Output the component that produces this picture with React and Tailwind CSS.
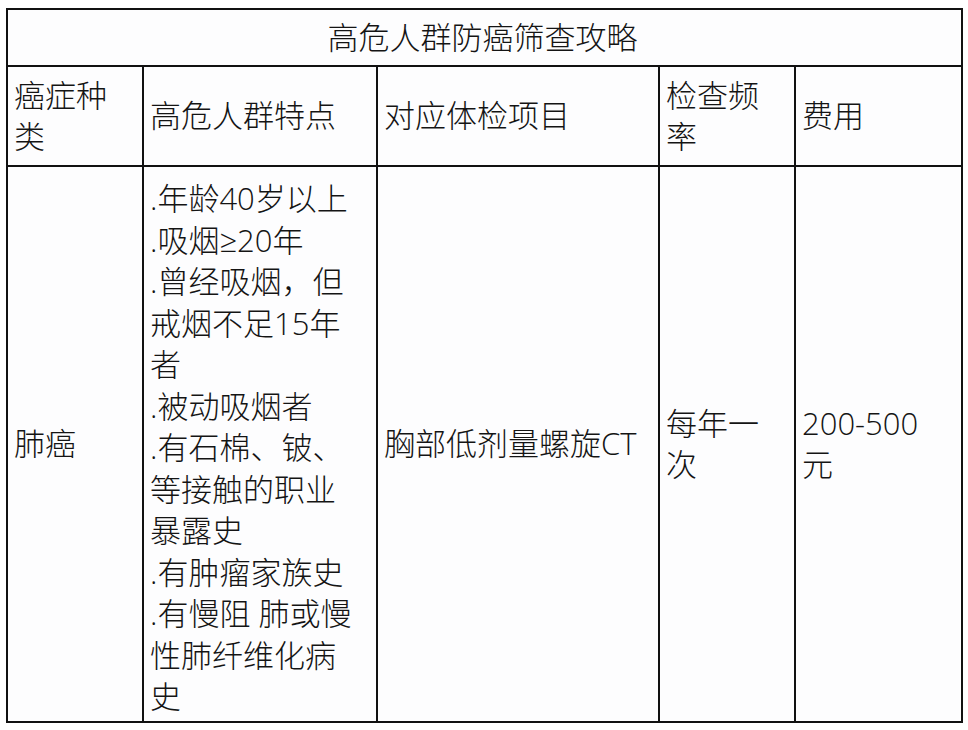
const FONT = { fontFamily: '"Open Sans", "Noto Sans CJK SC", sans-serif' }

const risks = [
  '.年龄40岁以上',
  '.吸烟≥20年',
  '.曾经吸烟，但',
  '戒烟不足15年',
  '者',
  '.被动吸烟者',
  '.有石棉、铍、',
  '等接触的职业',
  '暴露史',
  '.有肿瘤家族史',
  '.有慢阻 肺或慢',
  '性肺纤维化病',
  '史',
]

function Cell({ lines, last, className = '' }) {
  return (
    <div
      className={`flex flex-col justify-center pl-[6px] overflow-hidden ${
        last ? '' : 'border-r-2 border-[#111]'
      } ${className}`}
    >
      {lines.map((l, i) => (
        <div key={i} className="whitespace-nowrap">
          {l}
        </div>
      ))}
    </div>
  )
}

export default function App() {
  return (
    <div className="w-[968px] h-[730px] bg-white pt-[8px] pl-[6px]" style={FONT}>
      <div className="w-[957px] border-2 border-[#111] text-[31px] leading-[41.5px] font-light text-[#141414] bg-[#fdfdfe]">
        <div className="h-[57px] border-b-2 border-[#111] flex items-center justify-center pr-[4px]">
          高危人群防癌筛查攻略
        </div>
        <div className="grid grid-cols-[136px_234px_282px_136px_165px] h-[100px] border-b-2 border-[#111]">
          <Cell lines={['癌症种', '类']} />
          <Cell lines={['高危人群特点']} />
          <Cell lines={['对应体检项目']} />
          <Cell lines={['检查频', '率']} />
          <Cell lines={['费用']} last />
        </div>
        <div className="grid grid-cols-[136px_234px_282px_136px_165px] h-[554px]">
          <Cell lines={['肺癌']} />
          <Cell lines={risks} className="pt-[8px]" />
          <Cell lines={['胸部低剂量螺旋CT']} />
          <Cell lines={['每年一', '次']} />
          <Cell lines={['200-500', '元']} last />
        </div>
      </div>
    </div>
  )
}
